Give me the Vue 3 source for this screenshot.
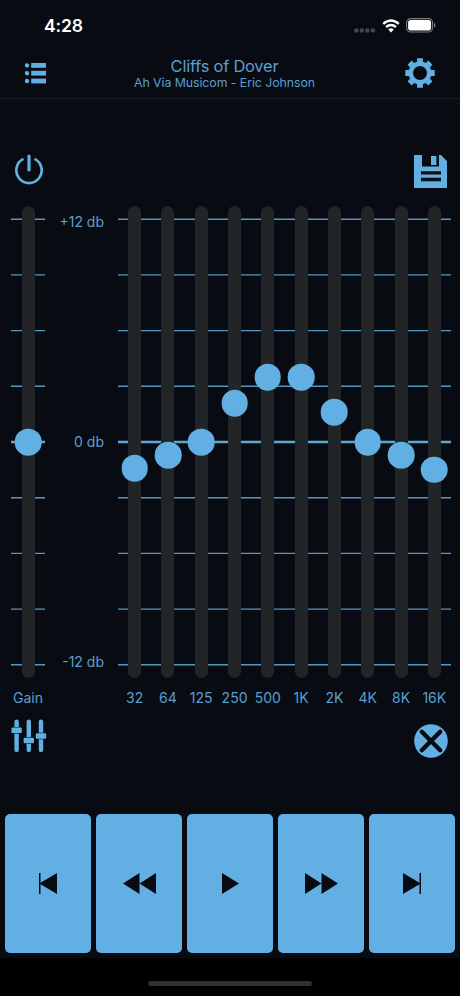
<template>
  <div class="player">

    <!-- Status bar -->
    <div class="status-bar">
      <span class="clock">4:28</span>
      <div class="indicators">
        <svg class="signal" width="22" height="5" viewBox="0 0 22 5">
          <rect v-for="n in 4" :key="n" :x="(n - 1) * 5.5 + 0.3" y="0.5" width="4" height="4" rx="1" />
        </svg>
        <svg class="wifi" width="18" height="14" viewBox="0 0 18 14">
          <path d="M1.2 4.8Q9 -2 16.8 4.8" />
          <path d="M4.1 8Q9 3.8 13.9 8" />
          <path class="dot" d="M6.2 10.4Q9 8 11.8 10.4L9 13.4Z" />
        </svg>
        <svg class="battery" width="30" height="15" viewBox="0 0 30 15">
          <rect class="shell" x="0.6" y="0.6" width="26" height="13.4" rx="4.2" />
          <rect class="charge" x="2.1" y="2.1" width="23" height="10.4" rx="2.8" />
          <path class="cap" d="M28 5Q29.4 5.6 29.4 7.3T28 9.6Z" />
        </svg>
      </div>
    </div>

    <!-- Header -->
    <header class="header">
      <svg class="icon" width="21" height="21" viewBox="0 0 21 21">
        <g v-for="y in [2.4, 10.2, 18]" :key="y">
          <circle cx="2" :cy="y" r="2.2" />
          <rect x="6.2" :y="y - 2.4" width="14.8" height="4.8" />
        </g>
      </svg>
      <div class="titles">
        <div class="track-title">Cliffs of Dover</div>
        <div class="track-info">Ah Via Musicom - Eric Johnson</div>
      </div>
      <svg class="icon" width="30" height="30" viewBox="-15 -15 30 30">
        <circle class="ring" r="9.2" />
        <path v-for="n in 8" :key="n" :transform="`rotate(${n * 45})`" d="M-4 -10L-2.9 -11.5V-14.7H2.9V-11.5L4 -10Z" />
      </svg>
    </header>

    <!-- Power / save -->
    <div class="tools top">
      <svg class="icon outline" width="30" height="32" viewBox="0 0 30 32">
        <path d="M9.5 4.9A12.7 12.7 0 1 0 20.5 4.9" />
        <path class="bar" d="M15 2V16" />
      </svg>
      <svg class="icon" width="33" height="33" viewBox="0 0 33 33">
        <path fill-rule="evenodd" d="M0 0H8V11.5H25V0H27L33 6.3V33H0ZM7 16.2H27V19.6H7ZM7 22.8H27V26.2H7Z" />
        <rect x="17" y="1" width="5.4" height="9" />
      </svg>
    </div>

    <!-- Equalizer -->
    <div class="equalizer">
      <div class="gain">
        <div class="plot">
          <svg class="grid" viewBox="0 0 10 472" preserveAspectRatio="none">
            <line v-for="n in 9" :key="n" :class="{ zero: n === 5 }" x1="0" x2="10" :y1="lineY(n)" :y2="lineY(n)" />
          </svg>
          <div class="track">
            <span class="thumb" :style="{ top: thumbTop(0) }"></span>
          </div>
        </div>
        <div class="label">Gain</div>
      </div>

      <div class="scale">
        <span>+12 db</span>
        <span>0 db</span>
        <span>-12 db</span>
      </div>

      <div class="bands">
        <div class="plot">
          <svg class="grid" viewBox="0 0 10 472" preserveAspectRatio="none">
            <line v-for="n in 9" :key="n" :class="{ zero: n === 5 }" x1="0" x2="10" :y1="lineY(n)" :y2="lineY(n)" />
          </svg>
          <div v-for="b in bands" :key="b.name" class="track">
            <span class="thumb" :style="{ top: thumbTop(b.db) }"></span>
          </div>
        </div>
        <div class="band-names">
          <span v-for="b in bands" :key="b.name" class="label">{{ b.name }}</span>
        </div>
      </div>
    </div>

    <!-- Presets / close -->
    <div class="tools bottom">
      <svg class="icon" width="36" height="34" viewBox="0 0 36 34">
        <g v-for="s in presetSliders" :key="s.x">
          <rect :x="s.x - 2.2" y="0.5" width="4.4" height="32.6" rx="2.2" />
          <rect class="gap" :x="s.x - 3" :y="s.y - 3.3" width="6" height="6.6" />
          <rect :x="s.x - 5.2" :y="s.y - 2.8" width="10.4" height="5.6" rx="1.2" />
        </g>
      </svg>
      <svg class="icon close" width="34" height="34" viewBox="0 0 34 34">
        <circle cx="17" cy="17" r="16.8" />
        <path d="M7.8 7.8L26.2 26.2M26.2 7.8L7.8 26.2" />
      </svg>
    </div>

    <!-- Transport -->
    <div class="transport">
      <button v-for="t in transport" :key="t.name" :aria-label="t.name">
        <svg :width="t.width" height="21" :viewBox="`0 0 ${t.width} 21`">
          <path :d="t.path" />
        </svg>
      </button>
    </div>

    <div class="home-area">
      <div class="home-indicator"></div>
    </div>

  </div>
</template>

<script setup>
import { ref } from "vue"

const bands = ref([
  { name: "32", db: -1.4 },
  { name: "64", db: -0.7 },
  { name: "125", db: 0 },
  { name: "250", db: 2.1 },
  { name: "500", db: 3.5 },
  { name: "1K", db: 3.5 },
  { name: "2K", db: 1.6 },
  { name: "4K", db: 0 },
  { name: "8K", db: -0.7 },
  { name: "16K", db: -1.5 }
])

const presetSliders = [
  { x: 5.6, y: 11.3 },
  { x: 17.8, y: 21.5 },
  { x: 30, y: 17 }
]

const transport = [
  { name: "Previous", width: 18, path: "M0 0H1.5V9.7L18 0V21L1.5 11.3V21H0Z" },
  { name: "Rewind", width: 33, path: "M0 10.5L16.5 0V10.5L33 0V21L16.5 10.5V21Z" },
  { name: "Play", width: 17, path: "M0 0L17 10.5L0 21Z" },
  { name: "Fast forward", width: 33, path: "M0 0L16.5 10.5V0L33 10.5L16.5 21V10.5L0 21Z" },
  { name: "Next", width: 18, path: "M0 0L16.5 9.7V0H18V21H16.5V11.3L0 21Z" }
]

// ±12 db spans 446px of the 472px track
function thumbTop(db) {
  return 236 - (db / 24) * 446 + "px"
}

function lineY(n) {
  return 236 + (n - 5) * 55.7
}
</script>

<style>
body {
  margin: 0;
  background: #080c12;
}
</style>

<style scoped>
.player {
  height: 996px;
  display: flex;
  flex-direction: column;
  background: #080c12;
  color: #5b9fd0;
  font-family: Inter, "Liberation Sans", sans-serif;
  overflow: hidden;
}

svg { display: block }

.status-bar {
  height: 48px;
  padding: 3px 24px 0 44px;
  box-sizing: border-box;
  display: flex;
  justify-content: space-between;
  align-items: center;
}

.clock {
  color: #fff;
  font-size: 17.6px;
  font-weight: 600;
  letter-spacing: -0.2px;
}

.indicators {
  display: flex;
  align-items: center;
  gap: 6px;
}

.signal {
  fill: #45484d;
  margin-top: 9px;
}

.wifi {
  fill: none;
  stroke: #fff;
  stroke-width: 2.4;
}

.wifi .dot {
  fill: #fff;
  stroke: none;
}

.shell { fill: none; stroke: #7c7e82; stroke-width: 1.1 }
.charge { fill: #fff }
.cap { fill: #7c7e82 }

.header {
  height: 51px;
  padding: 0 25px;
  box-sizing: border-box;
  border-bottom: 1px solid #191c20;
  display: flex;
  justify-content: space-between;
  align-items: center;
}

.titles {
  text-align: center;
  margin-right: 2px;
}

.track-title {
  font-size: 16.4px;
  line-height: 20px;
  letter-spacing: -0.2px;
}

.track-info {
  font-size: 12.3px;
  line-height: 14px;
  letter-spacing: -0.05px;
}

.icon { fill: #62afe3 }

.ring {
  fill: none;
  stroke: #62afe3;
  stroke-width: 4.4;
}

.tools {
  display: flex;
  justify-content: space-between;
}

.tools.top {
  height: 107px;
  padding: 56px 13px 0 14px;
  box-sizing: border-box;
  align-items: flex-start;
}

.outline {
  fill: none;
  stroke: #62afe3;
  stroke-width: 2.7;
  margin-top: -1px;
}

.outline .bar {
  stroke-width: 3.2;
  stroke-linecap: round;
}

.equalizer {
  display: flex;
  padding: 0 9px 0 11px;
}

.gain { width: 34px }

.plot {
  height: 472px;
  position: relative;
  display: flex;
  justify-content: space-around;
}

.grid {
  position: absolute;
  inset: 0;
  width: 100%;
  height: 100%;
  stroke: #5296c2;
  stroke-width: 1.4;
}

.grid .zero {
  stroke: #5fa5d4;
  stroke-width: 2.4;
}

.track {
  width: 13px;
  border-radius: 7px;
  background: #212527;
  position: relative;
}

.thumb {
  position: absolute;
  left: 50%;
  width: 26.6px;
  height: 26.6px;
  border-radius: 50%;
  background: #62afe3;
  transform: translate(-50%, -50%);
}

.label {
  font-size: 14px;
  line-height: 18px;
  text-align: center;
  white-space: nowrap;
}

.gain .label { margin-top: 11px }

.scale {
  width: 59px;
  height: 460px;
  padding-top: 6px;
  display: flex;
  flex-direction: column;
  justify-content: space-between;
  text-align: right;
  font-size: 14px;
  line-height: 20px;
}

.bands {
  flex: 1;
  margin-left: 14px;
}

.band-names {
  display: flex;
  margin-top: 11px;
}

.band-names .label {
  flex: 1 0 0;
  width: 0;
  display: flex;
  justify-content: center;
}

.tools.bottom {
  flex: 1;
  padding: 12px 12px 0 11px;
}

.gap { fill: #080c12 }

.close { margin-top: 5px }

.close path {
  stroke: #080c12;
  stroke-width: 4.4;
  stroke-linecap: round;
}

.transport {
  height: 144px;
  padding: 0 4.5px 5.5px 5px;
  box-sizing: border-box;
  display: flex;
  gap: 4.7px;
}

.transport button {
  flex: 1;
  padding: 0;
  border: 0;
  border-radius: 5px;
  background: #62afe3;
  display: flex;
  align-items: center;
  justify-content: center;
}

.transport svg { fill: #080c12 }

.home-area {
  height: 38px;
  background: #000;
}

.home-indicator {
  width: 164px;
  height: 5px;
  margin: 23px auto 0;
  border-radius: 3px;
  background: #303030;
}
</style>
